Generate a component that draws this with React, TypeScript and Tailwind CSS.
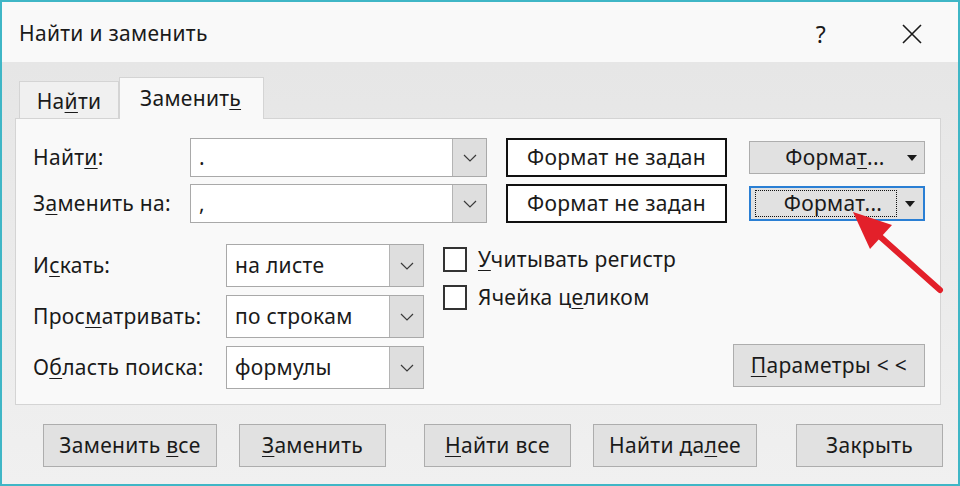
import type { ReactNode } from "react";

const font = { fontFamily: '"Noto Sans", "Open Sans", Arial, sans-serif' };

function U({ children }: { children: ReactNode }) {
  return <span className="underline decoration-1 underline-offset-[3px]">{children}</span>;
}

function Chevron() {
  return (
    <svg width="14" height="8" viewBox="0 0 14 8" fill="none">
      <path d="M1 1 L7 7 L13 1" stroke="#3a3a3a" strokeWidth="1.2" />
    </svg>
  );
}

function Caret() {
  return (
    <svg width="10" height="6" viewBox="0 0 10 6">
      <path d="M0 0 H10 L5 6 Z" fill="#1a1a1a" />
    </svg>
  );
}

function Combo({ value, className }: { value: string; className: string }) {
  return (
    <div className={`flex border border-[#a9a9a9] bg-white ${className}`}>
      <div className="flex flex-1 items-center pl-[8px] text-[21px] text-[#1a1a1a]">{value}</div>
      <div className="flex w-[34px] items-center justify-center border-l border-[#b4b4b4] bg-[#dedede]">
        <Chevron />
      </div>
    </div>
  );
}

function Btn({ children, className }: { children: ReactNode; className: string }) {
  return (
    <button className={`flex h-[43px] items-center justify-center border border-[#adadad] bg-[#e1e1e1] text-[21px] tracking-[0.3px] text-[#1a1a1a] ${className}`}>
      {children}
    </button>
  );
}

function Checkbox({ children }: { children: ReactNode }) {
  return (
    <label className="flex h-[25px] items-center gap-[11px] text-[21px] text-[#1a1a1a]">
      <span className="h-[25px] w-[24px] border-2 border-[#333] bg-white" />
      {children}
    </label>
  );
}

export default function App() {
  return (
    <div style={font} className="relative flex h-[486px] w-[960px] flex-col overflow-hidden border-2 border-[#3fb6c6] bg-[#ededed] tracking-[0.3px]">
      {/* title bar */}
      <div className="flex h-[60px] items-center bg-[#f9f9f9] pl-[17px] pr-[36px] pt-[4px]">
        <span className="text-[21px] text-[#1a1a1a]">Найти и заменить</span>
        <span className="ml-auto mr-[76px] text-[23px] text-[#1a1a1a]">?</span>
        <svg width="20" height="20" viewBox="0 0 20 20">
          <path d="M1 1 L19 19 M19 1 L1 19" stroke="#1a1a1a" strokeWidth="1.6" />
        </svg>
      </div>

      <div className="flex flex-1 flex-col bg-gradient-to-b from-[#e6e6e6] to-[#f0f0f0] px-[13px] pt-[15px]">
        {/* tabs */}
        <div className="flex items-end pl-[4px]">
          <div className="flex h-[37px] w-[100px] items-center justify-center border border-b-0 border-[#d4d4d4] bg-[#f0f0f0] pt-[4px] text-[21px] text-[#1a1a1a]">
            На<U>й</U>ти
          </div>
          <div className="relative z-10 -mb-px flex h-[42px] w-[145px] items-center border border-b-0 border-[#d4d4d4] bg-[#f9f9f9] pl-[20px] text-[21px] text-[#1a1a1a]">
            Заменит<U>ь</U>
          </div>
        </div>

        {/* panel */}
        <div className="flex h-[287px] w-[926px] flex-col border border-[#d4d4d4] bg-[#f9f9f9] pl-[17px] pr-[15px] pt-[19px] text-[21px] text-[#1a1a1a]">
          <div className="flex flex-col gap-[7px]">
            <div className="flex items-center">
              <span className="w-[157px]">Найт<U>и</U>:</span>
              <Combo value="." className="h-[39px] w-[297px]" />
              <div className="ml-[19px] flex h-[39px] w-[221px] items-center justify-center border-2 border-[#111] bg-white">Формат не задан</div>
              <button className="ml-[22px] flex h-[33px] w-[176px] items-center border border-[#adadad] bg-[#e1e1e1]">
                <span className="flex flex-1 justify-center pl-[20px]">Форма<U>т</U>...</span>
                <span className="flex w-[24px] justify-center"><Caret /></span>
              </button>
            </div>
            <div className="flex items-center">
              <span className="w-[157px]">З<U>а</U>менить на:</span>
              <Combo value="," className="h-[39px] w-[297px]" />
              <div className="ml-[19px] flex h-[39px] w-[221px] items-center justify-center border-2 border-[#111] bg-white">Формат не задан</div>
              <button className="ml-[22px] flex h-[35px] w-[176px] items-center border-2 border-[#2a7fd4] bg-[#e1e1e1] pl-[4px]">
                <span className="flex h-[27px] w-[142px] items-center justify-center border border-dotted border-[#111] pl-[14px]">Формат...</span>
                <span className="flex flex-1 justify-center"><Caret /></span>
              </button>
            </div>
          </div>

          <div className="mt-[21px] flex">
            <div className="flex flex-col gap-[8px]">
              <div className="flex items-center">
                <span className="w-[193px]">И<U>с</U>кать:</span>
                <Combo value="на листе" className="h-[43px] w-[198px]" />
              </div>
              <div className="flex items-center">
                <span className="w-[193px]">Прос<U>м</U>атривать:</span>
                <Combo value="по строкам" className="h-[43px] w-[198px]" />
              </div>
              <div className="flex items-center">
                <span className="w-[193px]">О<U>б</U>ласть поиска:</span>
                <Combo value="формулы" className="h-[43px] w-[198px]" />
              </div>
            </div>
            <div className="ml-[19px] mt-[3px] flex flex-col gap-[13px]">
              <Checkbox><span><U>У</U>читывать регистр</span></Checkbox>
              <Checkbox><span>Ячейка ц<U>е</U>ликом</span></Checkbox>
            </div>
            <Btn className="mb-[2px] ml-auto w-[192px] self-end">
              <span><U>П</U>араметры &lt; &lt;</span>
            </Btn>
          </div>
        </div>

        {/* bottom buttons */}
        <div className="mt-[19px] flex pl-[28px]">
          <Btn className="w-[174px]"><span>Заменить <U>в</U>се</span></Btn>
          <Btn className="ml-[22px] w-[147px]"><span><U>З</U>аменить</span></Btn>
          <Btn className="ml-[38px] w-[147px]"><span><U>Н</U>айти все</span></Btn>
          <Btn className="ml-[22px] w-[164px]"><span>Найти да<U>л</U>ее</span></Btn>
          <Btn className="ml-[39px] w-[147px]"><span>Закрыть</span></Btn>
        </div>
      </div>

      {/* red annotation arrow */}
      <svg className="pointer-events-none absolute left-[-2px] top-[-2px]" width="960" height="486" viewBox="0 0 960 486">
        <path d="M940 290 L876 233" stroke="#e3202a" strokeWidth="6" strokeLinecap="round" />
        <path d="M853 212 L892 225 L870 249 Z" fill="#e3202a" />
      </svg>
    </div>
  );
}
